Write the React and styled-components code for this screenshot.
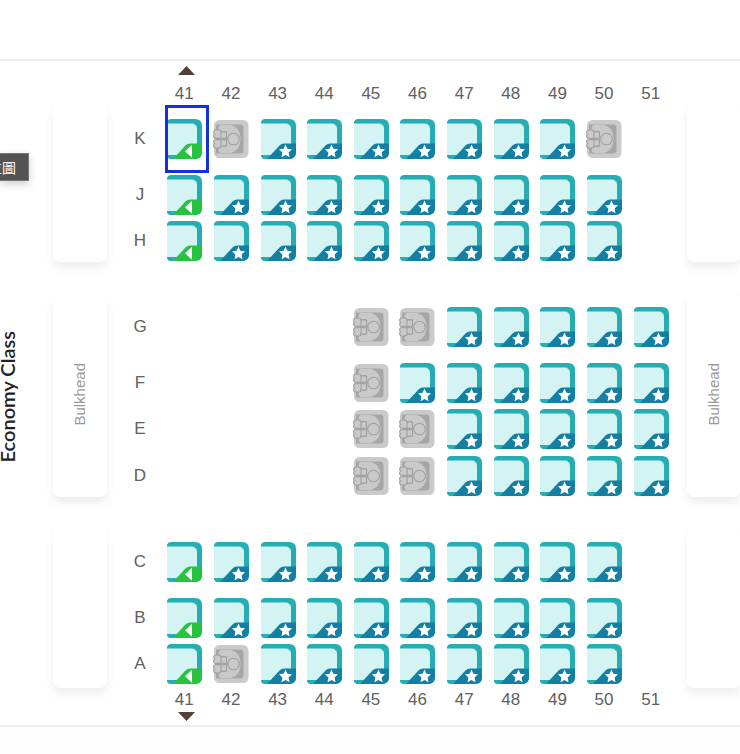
import React, { useState } from "react";
import styled, { createGlobalStyle } from "styled-components";

const columns = [41, 42, 43, 44, 45, 46, 47, 48, 49, 50, 51];

// o = open, l = open with the green marker, x = taken, . = no seat
const sections = [
  {
    rows: [
      { letter: "K", seats: "lxooooooox.", after: 16 },
      { letter: "J", seats: "looooooooo.", after: 6 },
      { letter: "H", seats: "looooooooo.", after: 1 },
    ],
  },
  {
    bulkhead: "Bulkhead",
    rows: [
      { letter: "G", seats: "....xxooooo", after: 16 },
      { letter: "F", seats: "....xoooooo", after: 6 },
      { letter: "E", seats: "....xxooooo", after: 7 },
      { letter: "D", seats: "....xxooooo", after: 1 },
    ],
  },
  {
    rows: [
      { letter: "C", seats: "looooooooo.", after: 16 },
      { letter: "B", seats: "looooooooo.", after: 6 },
      { letter: "A", seats: "lxoooooooo.", after: 4 },
    ],
  },
];

function OpenSeat({ marked }) {
  return (
    <svg width="36" height="40" viewBox="0 0 36 40">
      <path
        d="M5 0H29Q36 0 36 7V33Q36 40 29 40H5Q2 40 1 37V36H30V5H1V3Q2 0 5 0Z"
        fill="#24adb2"
      />
      <path d="M1 4.600H26.500Q31 4.600 31 9V36H1Z" fill="#d4f4f3" />
      <path d="M26 4.600H30.500V9.500Q30.500 5 26 4.600Z" fill="#24adb2" />
      <path d="M1 36H14L10 40H5Q2 40 1 37Z" fill={marked ? "#2aa9c0" : "#25adb5"} />
      <path
        d="M7 40L19.500 26.500Q21.500 24.500 24 24.500H36V33Q36 40 29 40Z"
        fill={marked ? "#27c240" : "#137fa3"}
      />
      {marked ? (
        <path d="M19 32.3L26 25.800V38.800Z" fill="#fff" />
      ) : (
        <path
          d="M25.5 25.4L27.4 29.800L32 30.300L28.6 33.500L29.5 38.300L25.5 35.900L21.5 38.300L22.4 33.500L19 30.300L23.600 29.800Z"
          fill="#fff"
        />
      )}
    </svg>
  );
}

function TakenSeat() {
  return (
    <svg width="36" height="40" viewBox="0 0 36 40">
      <rect x="1" y="1" width="34.5" height="38" rx="5.5" fill="#cacaca" />
      <path d="M3 5.500H27Q30.5 5.500 30.5 9V31Q30.5 34.5 27 34.5H3Z" fill="#a6a6a6" />
      <path
        d="M8 6H18Q27.500 8.500 27.500 20Q27.500 31.500 18 34H8Q5.500 33.500 5.500 30.500Q5.500 28.500 8 28H13V12H8Q5.500 11.500 5.500 9.500Q5.500 6.500 8 6Z"
        fill="#c9c9c9"
      />
      <g fill="#cacaca" stroke="#a0a0a0" strokeWidth="1.1">
        <path d="M5 13H13.500V19.200H5Z" />
        <path d="M5 20.800H13.500V27H5Z" />
        <path d="M3 11H5.500Q8 11 8 13.500V19.200H3Q.6 19.200 .6 17.300Q.6 15.600 1.600 15.200Q.6 14.500 .6 13.300Q.8 11 3 11Z" />
        <path d="M3 29H5.500Q8 29 8 26.500V20.800H3Q.6 20.800 .6 22.700Q.6 24.400 1.600 24.800Q.6 25.500 .6 26.700Q.8 29 3 29Z" />
        <circle cx="20.5" cy="20" r="5.800" />
      </g>
    </svg>
  );
}

function ColumnNumbers() {
  return (
    <Band>
      <Line>
        <span />
        {columns.map((n) => (
          <Caption key={n}>{n}</Caption>
        ))}
      </Line>
    </Band>
  );
}

function ExitArrow({ down }) {
  return (
    <Band>
      <Line>
        <span />
        <Exit>
          <svg width="17" height="9" viewBox="0 0 17 9">
            <path d={down ? "M0 0H17L8.5 9Z" : "M0 9H17L8.5 0Z"} fill="#54403a" />
          </svg>
        </Exit>
      </Line>
    </Band>
  );
}

function App() {
  const [selected, setSelected] = useState("41K");

  return (
    <>
      <GlobalStyle />
      <Page>
        <MapButton type="button">
          <span>座位圖</span>
        </MapButton>
        <Cabin>
          <ClassColumn>
            <ClassName>Economy Class</ClassName>
          </ClassColumn>
          <Deck>
            <ExitArrow />
            <Numbers $top={9}>
              <ColumnNumbers />
            </Numbers>
            <Sections>
              {sections.map((section) => (
                <Section key={section.rows[0].letter}>
                  <Bulkhead>
                    <BulkheadText>{section.bulkhead}</BulkheadText>
                  </Bulkhead>
                  <Rows>
                    {section.rows.map((row) => (
                      <SeatLine key={row.letter} $after={row.after}>
                        <Caption>{row.letter}</Caption>
                        {columns.map((n, i) => {
                          const kind = row.seats[i];
                          const id = n + row.letter;
                          if (kind === ".") return <span key={id} />;
                          return (
                            <Seat
                              key={id}
                              type="button"
                              aria-label={"Seat " + id}
                              disabled={kind === "x"}
                              $selected={selected === id}
                              onClick={() => setSelected(id)}
                            >
                              {kind === "x" ? (
                                <TakenSeat />
                              ) : (
                                <OpenSeat marked={kind === "l"} />
                              )}
                            </Seat>
                          );
                        })}
                      </SeatLine>
                    ))}
                  </Rows>
                  <Bulkhead>
                    <BulkheadText>{section.bulkhead}</BulkheadText>
                  </Bulkhead>
                </Section>
              ))}
            </Sections>
            <Numbers $top={2}>
              <ColumnNumbers />
            </Numbers>
            <Numbers $top={2}>
              <ExitArrow down />
            </Numbers>
          </Deck>
        </Cabin>
      </Page>
    </>
  );
}

export default App;

const GlobalStyle = createGlobalStyle`
  * {
    box-sizing: border-box;
  }
  body {
    margin: 0;
    background: #fdfdfd;
    font-family: "Liberation Sans", Arial, sans-serif;
    overflow-x: hidden;
  }
`;

const Page = styled.main`
  position: relative;
  padding-top: 59px;
  background: #fff;
`;

const Cabin = styled.section`
  display: flex;
  border-top: 2px solid #eee;
  border-bottom: 2px solid #eee;
`;

const MapButton = styled.button`
  position: absolute;
  z-index: 1;
  top: 153px;
  left: 0;
  display: flex;
  align-items: center;
  justify-content: flex-end;
  width: 29px;
  height: 28px;
  padding: 0 12px 0 0;
  border: 1px solid #777;
  border-left: 0;
  background: #535353;
  color: #fff;
  font-family: "Liberation Sans", "Noto Sans CJK TC", sans-serif;
  font-size: 14px;
  white-space: nowrap;
  overflow: hidden;
  box-shadow: 0 3px 8px rgba(0, 0, 0, 0.2);
`;

const ClassColumn = styled.div`
  flex: 0 0 53px;
  display: flex;
  align-items: center;
  padding-top: 8px;
`;

const ClassName = styled.h2`
  margin: 0;
  writing-mode: vertical-rl;
  transform: rotate(180deg);
  font-family: Lato, sans-serif;
  font-size: 20px;
  font-weight: 600;
  line-height: 14px;
  color: #222;
`;

const Deck = styled.div`
  flex: 1;
  min-width: 0;
  padding: 5px 0 4px;
`;

const Section = styled.div`
  display: grid;
  grid-template-columns: 54px 1fr 53px;
`;

const Band = styled(Section)`
  & > * {
    grid-column: 2;
  }
`;

const Numbers = styled.div`
  padding-top: ${({ $top }) => $top}px;
`;

const Sections = styled.div`
  display: flex;
  flex-direction: column;
  gap: 30px;
`;

const Bulkhead = styled.div`
  display: flex;
  align-items: center;
  justify-content: center;
  border-radius: 7px;
  background: #fff;
  box-shadow: 0 6px 10px rgba(0, 0, 0, 0.07);
`;

const BulkheadText = styled.span`
  writing-mode: vertical-rl;
  transform: rotate(180deg);
  font-size: 15px;
  line-height: 16px;
  color: #999;
`;

const Rows = styled.div`
  padding-top: 15px;
`;

const Line = styled.div`
  display: grid;
  grid-template-columns: 42px repeat(11, 1fr);
  align-items: center;
  justify-items: center;
  padding: 0 13px 0 12px;
`;

const SeatLine = styled(Line)`
  padding-bottom: ${({ $after }) => $after}px;
`;

const Caption = styled.span`
  font-size: 17px;
  line-height: 20px;
  color: #606060;
`;

const Exit = styled.span`
  display: flex;
  padding-left: 5px;
`;

const Seat = styled.button`
  position: relative;
  display: flex;
  padding: 0;
  border: 0;
  background: none;
  cursor: pointer;

  &:disabled {
    cursor: default;
  }

  &::after {
    content: "";
    display: ${({ $selected }) => ($selected ? "block" : "none")};
    position: absolute;
    top: -14px;
    right: -7px;
    bottom: -14px;
    left: -1px;
    border: 3px solid #1230dc;
  }
`;
